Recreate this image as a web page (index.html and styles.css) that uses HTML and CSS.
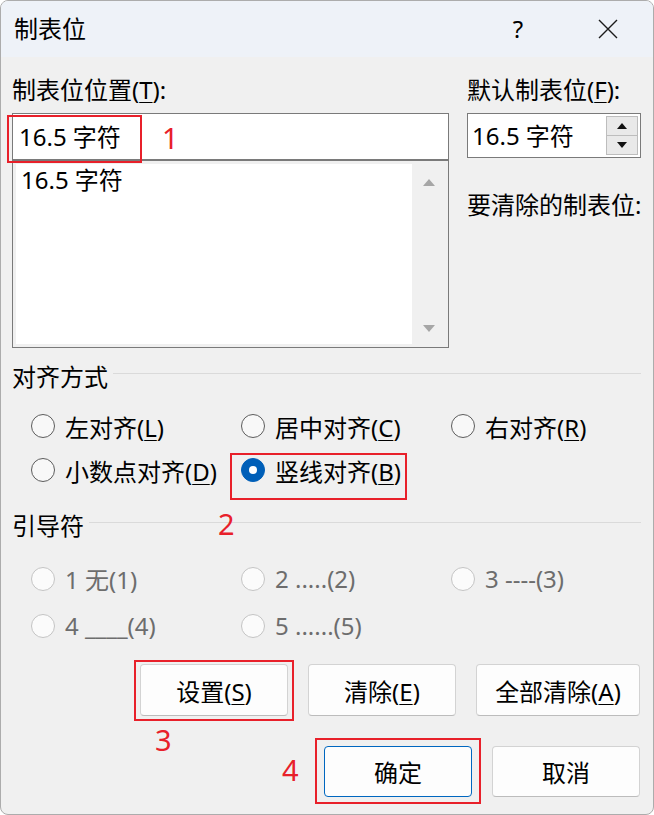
FILE: index.html
```html
<!DOCTYPE html>
<html lang="zh-CN">
<head>
<meta charset="utf-8">
<title>制表位</title>
<link rel="stylesheet" href="styles.css">
</head>
<body>
<div class="dialog">
  <div class="titlebar">
    <span class="title">制表位</span>
    <span class="tb-help">?</span>
    <span class="tb-close">
      <svg width="20" height="20" viewBox="0 0 20 20"><path d="M1 1L19 19M19 1L1 19" stroke="#1b1b1b" stroke-width="1.4" fill="none"/></svg>
    </span>
  </div>
  <div class="content">
    <div class="top">
      <div class="col-left">
        <div class="label">制表位位置(<u>T</u>):</div>
        <div class="input">16.5 字符</div>
        <div class="list">
          <div class="list-items"><div class="list-item">16.5 字符</div></div>
          <div class="scroll">
            <svg class="arrow-up" width="12" height="7" viewBox="0 0 12 7"><path d="M6 0L12 7H0Z" fill="#a6a6a6"/></svg>
            <svg class="arrow-down" width="12" height="7" viewBox="0 0 12 7"><path d="M0 0H12L6 7Z" fill="#a6a6a6"/></svg>
          </div>
        </div>
      </div>
      <div class="col-right">
        <div class="label">默认制表位(<u>F</u>):</div>
        <div class="spin">
          <div class="spin-text">16.5 字符</div>
          <div class="spin-btns">
            <div class="spin-btn"><svg width="10" height="6" viewBox="0 0 10 6"><path d="M5 0L10 6H0Z" fill="#111"/></svg></div>
            <div class="spin-btn"><svg width="10" height="6" viewBox="0 0 10 6"><path d="M0 0H10L5 6Z" fill="#111"/></svg></div>
          </div>
        </div>
        <div class="label clear-label">要清除的制表位:</div>
      </div>
    </div>

    <div class="group-head"><span class="group-title">对齐方式</span><span class="rule"></span></div>
    <div class="radios">
      <div class="radio"><span class="dot"></span><span>左对齐(<u>L</u>)</span></div>
      <div class="radio"><span class="dot"></span><span>居中对齐(<u>C</u>)</span></div>
      <div class="radio"><span class="dot"></span><span>右对齐(<u>R</u>)</span></div>
      <div class="radio"><span class="dot"></span><span>小数点对齐(<u>D</u>)</span></div>
      <div class="radio"><span class="dot checked"></span><span>竖线对齐(<u>B</u>)</span></div>
    </div>

    <div class="group-head group2"><span class="group-title">引导符</span><span class="rule"></span></div>
    <div class="radios disabled">
      <div class="radio"><span class="dot"></span><span>1 无(1)</span></div>
      <div class="radio"><span class="dot"></span><span>2 .....(2)</span></div>
      <div class="radio"><span class="dot"></span><span>3 ----(3)</span></div>
      <div class="radio"><span class="dot"></span><span>4 ____(4)</span></div>
      <div class="radio"><span class="dot"></span><span>5 ......(5)</span></div>
    </div>

    <div class="btn-row row1">
      <button class="btn">设置(<u>S</u>)</button>
      <button class="btn">清除(<u>E</u>)</button>
      <button class="btn wide">全部清除(<u>A</u>)</button>
    </div>
    <div class="btn-row row2">
      <button class="btn primary">确定</button>
      <button class="btn">取消</button>
    </div>
  </div>

  <div class="mark box1"></div>
  <div class="mark box2"></div>
  <div class="mark box3"></div>
  <div class="mark box4"></div>
  <span class="num n1">1</span>
  <span class="num n2">2</span>
  <span class="num n3">3</span>
  <span class="num n4">4</span>
</div>
</body>
</html>
```

FILE: styles.css
```css
html, body {
  margin: 0;
  padding: 0;
  background: #ffffff;
}
body {
  font-family: "Noto Sans", "Noto Sans CJK SC", sans-serif;
  font-size: 24px;
  color: #000;
}
u { text-decoration-thickness: 1px; text-underline-offset: 3px; }

.dialog {
  position: relative;
  width: 654px;
  height: 815px;
  box-sizing: border-box;
  border: 1px solid #acacac;
  border-radius: 8px;
  background: #f0f0f0;
  overflow: hidden;
}

.titlebar {
  height: 56px;
  background: #eef2f8;
  display: flex;
  align-items: center;
  padding-left: 13px;
}
.title { line-height: 30px; }
.tb-help {
  margin-left: auto;
  width: 46px;
  text-align: center;
  line-height: 30px;
}
.tb-close {
  width: 46px;
  margin-left: 44px;
  margin-right: 22px;
  display: flex;
  justify-content: center;
}

.content {
  padding: 18px 12px 0 11px;
}

.top {
  display: flex;
  gap: 18px;
}
.col-left { width: 438px; }
.col-right { width: 174px; }

.label {
  height: 30px;
  line-height: 30px;
  white-space: nowrap;
}

.input {
  margin-top: 8px;
  height: 45px;
  line-height: 45px;
  border: 1px solid #7a7a7a;
  background: #fff;
  padding-left: 6px;
}

.list {
  height: 180px;
  border: 1px solid #7a7a7a;
  background: #f0f0f0;
  padding: 3px 3px 3px 3px;
  display: flex;
}
.list-items {
  flex: 1;
  background: #fff;
}
.list-item {
  padding-left: 5px;
  line-height: 32px;
}
.scroll {
  width: 33px;
  display: flex;
  flex-direction: column;
  align-items: center;
  justify-content: space-between;
  padding: 15px 0 12px;
}

.spin {
  margin-top: 8px;
  height: 43px;
  border: 1px solid #7a7a7a;
  background: #fff;
  display: flex;
}
.spin-text {
  flex: 1;
  padding-left: 4px;
  line-height: 43px;
}
.spin-btns {
  width: 32px;
  margin: 2px 2px 2px 0;
  display: flex;
  flex-direction: column;
}
.spin-btn {
  flex: 1;
  border: 1px solid #bdbdbd;
  background: #e9e9e9;
  display: flex;
  align-items: center;
  justify-content: center;
}
.spin-btn + .spin-btn { border-top: none; }

.clear-label { margin-top: 32px; }

.group-head {
  margin-top: 14px;
  height: 30px;
  display: flex;
  line-height: 30px;
}
.group2 { margin-top: 19px; }
.group-title { white-space: nowrap; }
.rule {
  flex: 1;
  height: 1px;
  background: #dadada;
  margin-top: 11px;
  margin-left: 5px;
}

.radios {
  margin-top: 12px;
  padding-left: 19px;
  display: grid;
  grid-template-columns: 210px 210px auto;
  grid-auto-rows: 44px;
}
.radios.disabled {
  margin-top: 14px;
  grid-auto-rows: 47px;
  color: #6d6d6d;
}
.radio {
  display: flex;
  align-items: center;
  gap: 10px;
  white-space: nowrap;
}
.dot {
  width: 22px;
  height: 22px;
  border-radius: 50%;
  border: 1.3px solid #5c5c5c;
  background: #f8f8f8;
  flex: none;
  box-sizing: content-box;
  position: relative;
}
.dot.checked {
  border-color: #005fb8;
  background: #005fb8;
}
.dot.checked::after {
  content: "";
  position: absolute;
  left: 7px;
  top: 7px;
  width: 8px;
  height: 8px;
  border-radius: 50%;
  background: #fff;
}
.disabled .dot {
  border-color: #c4c4c4;
  background: #fbfbfb;
}

.btn-row {
  display: flex;
  justify-content: flex-end;
  gap: 20px;
  padding-right: 1px;
}
.row1 { margin-top: 15px; }
.row2 { margin-top: 30px; }
.btn {
  font: inherit;
  color: #000;
  width: 148px;
  height: 52px;
  background: #fdfdfd;
  border: 1px solid #d3d3d3;
  border-bottom-color: #bcbcbc;
  border-radius: 4px;
  padding: 0;
}
.row2 .btn { height: 51px; }
.btn.wide { width: 164px; }
.btn.primary { border: 1px solid #0067c0; }

.mark {
  position: absolute;
  border: 2px solid #e8202a;
  box-sizing: border-box;
}
.box1 { left: 6px; top: 114px; width: 135px; height: 48px; }
.box2 { left: 229px; top: 452px; width: 177px; height: 47px; }
.box3 { left: 133px; top: 659px; width: 160px; height: 61px; }
.box4 { left: 314px; top: 737px; width: 166px; height: 66px; }

.num {
  position: absolute;
  color: #e8202a;
  font-family: "Noto Sans", sans-serif;
  font-size: 29px;
  line-height: 30px;
}
.n1 { left: 161px; top: 122px; }
.n2 { left: 217px; top: 508px; }
.n3 { left: 154px; top: 724px; }
.n4 { left: 281px; top: 754px; }
```
